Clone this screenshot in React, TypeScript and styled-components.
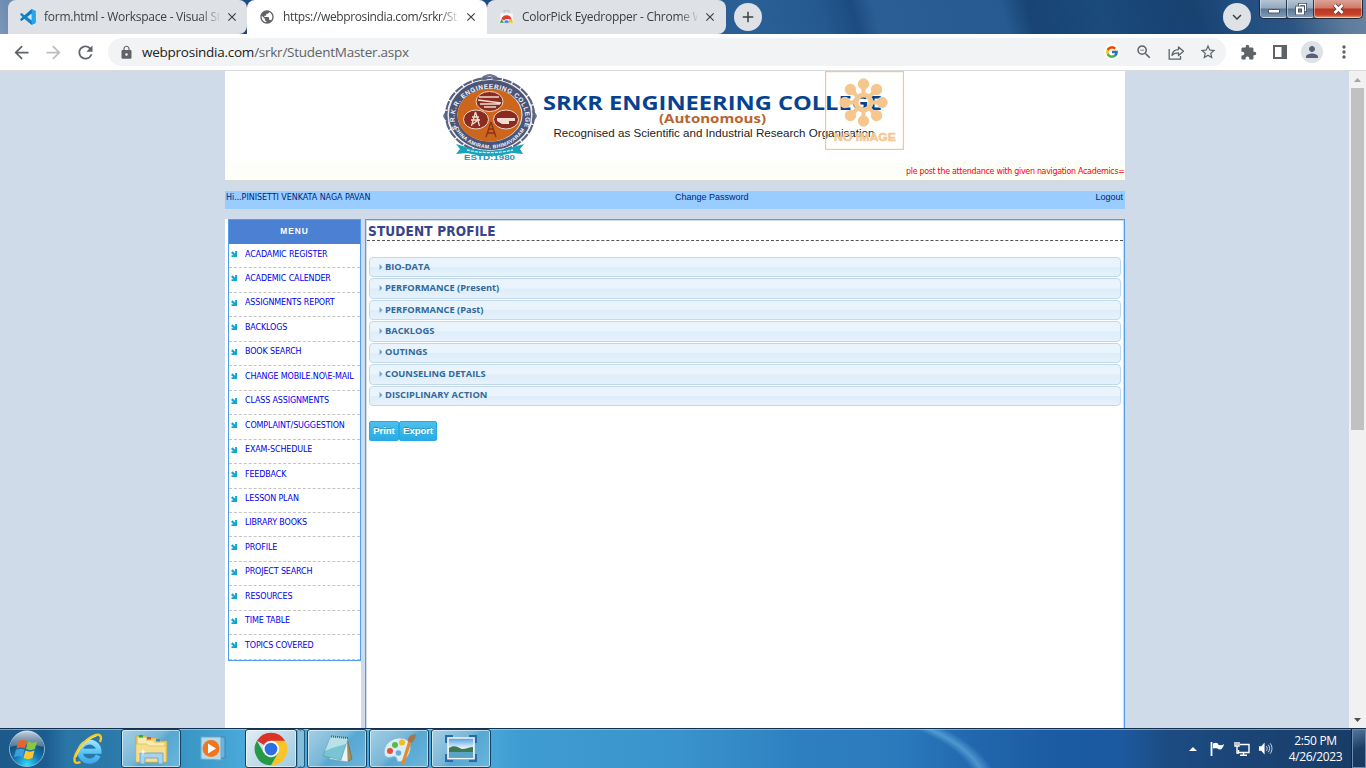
import React from "react";
import styled, { createGlobalStyle } from "styled-components";
import {
  MdAdd, MdArrowBack, MdArrowForward, MdClose, MdExtension, MdLock, MdMoreVert,
  MdPerson, MdPublic, MdRefresh, MdStarBorder, MdZoomOut, MdKeyboardArrowDown,
} from "react-icons/md";
import { FcGoogle } from "react-icons/fc";

const GlobalStyle = createGlobalStyle`
  * { box-sizing: border-box; }
  body { margin: 0; overflow: hidden; background: #d0dbe9; }
`;

const ui = `"Open Sans", "Noto Sans", sans-serif`;
const tahoma = `"DejaVu Sans", sans-serif`;
const tahomaBold = `"DejaVu Sans Condensed", "DejaVu Sans", sans-serif`;

const Screen = styled.div`
  width: 1366px;
  height: 768px;
  display: flex;
  flex-direction: column;
  overflow: hidden;
`;

/* ---------- browser chrome ---------- */

const TabStrip = styled.div`
  height: 34px;
  flex: none;
  display: flex;
  padding-left: 8px;
  background: linear-gradient(75deg, #7d97ba 0, #6f8cb2 12px, #1b4a84 240px, #1b4a84 490px, #2b6096 730px,
    #24588f 800px, #1c4b80 830px, #2b5e94 850px, #265a90 975px, #174474 1000px, #1b4a7c 1070px, #174474 1120px,
    #184270 1160px, #204e80 1200px, #2a5482 1250px, #5b7a9c 1300px, #7a92ab 1366px);
`;

const Tab = styled.div<{ $active?: boolean; $width: number }>`
  width: ${(p) => p.$width}px;
  height: 34px;
  display: flex;
  align-items: center;
  padding-left: 12px;
  border-radius: ${(p) => (p.$active ? "8px 8px 0 0" : "8px 8px 8px 0")};
  background: ${(p) => (p.$active ? "#fff" : "#dee1e6")};
  svg { flex: none; }
`;

const TabTitle = styled.div<{ $spacing: number }>`
  width: 175px;
  margin-left: 8px;
  margin-right: 6px;
  font: 12px/18px ${ui};
  letter-spacing: ${(p) => p.$spacing}px;
  color: #3c4043;
  white-space: nowrap;
  overflow: hidden;
  mask-image: linear-gradient(90deg, #000 156px, transparent 178px);
`;

const RoundButton = styled.div<{ $left: number }>`
  width: 28px;
  height: 28px;
  margin: 3px 0 0 ${(p) => p.$left}px;
  border-radius: 50%;
  background: #dee1e6;
  color: #3c4043;
  display: flex;
  align-items: center;
  justify-content: center;
`;

const WindowButtons = styled.div`
  display: flex;
  width: 104px;
  height: 19px;
  margin-left: 8px;
  border: 1px solid #1f2a3a;
  border-top: 0;
  border-radius: 0 0 5px 5px;
  overflow: hidden;
`;

const WindowButton = styled.div<{ $kind: "plain" | "close" }>`
  width: ${(p) => (p.$kind === "close" ? 48 : 27.5)}px;
  display: flex;
  align-items: center;
  justify-content: center;
  border: 1px solid rgba(255, 255, 255, 0.4);
  border-top: 0;
  border-radius: 0 0 3px 3px;
  background: ${(p) =>
    p.$kind === "close"
      ? "linear-gradient(#dba296, #cf7a67 8px, #b93521 9px, #c8452b 15px, #d98b68)"
      : "linear-gradient(#b5c4d3, #93a9bf 8px, #5b7896 9px, #7f99b3)"};
  & + & { box-shadow: -1px 0 0 #26364b; }
`;

const Toolbar = styled.div`
  height: 37px;
  flex: none;
  display: flex;
  align-items: center;
  padding: 0 6px 0 5px;
  background: #fff;
  border-bottom: 1px solid #d7d9dc;
`;

const IconCell = styled.div<{ $color?: string }>`
  width: 32px;
  height: 28px;
  flex: none;
  display: flex;
  align-items: center;
  justify-content: center;
  color: ${(p) => p.$color ?? "#5f6368"};
`;

const AddressBar = styled.div`
  width: 1118px;
  height: 28px;
  margin: 0 6px 0 7px;
  padding: 0 2px 0 11px;
  border-radius: 14px;
  background: #f1f3f4;
  display: flex;
  align-items: center;
`;

const Url = styled.div`
  flex: 1;
  margin-left: 8px;
  font: 13.5px/20px ${ui};
  letter-spacing: -0.25px;
  color: #5f6368;
  b { font-weight: 400; color: #202124; }
`;

const Disc = styled.div<{ $size: number; $bg: string }>`
  width: ${(p) => p.$size}px;
  height: ${(p) => p.$size}px;
  border-radius: 50%;
  background: ${(p) => p.$bg};
  display: flex;
  align-items: center;
  justify-content: center;
`;

/* ---------- page ---------- */

const Viewport = styled.div`
  height: 657px;
  flex: none;
  display: flex;
  overflow: hidden;
  background: #d0dbe9;
`;

const Page = styled.div`
  width: 900px;
  height: 657px;
  margin-left: 225px;
  display: flex;
  flex-direction: column;
`;

const Banner = styled.div`
  position: relative;
  height: 90px;
  flex: none;
  background: #fff;
`;

const NoImage = styled.svg`
  position: absolute;
  left: 600px;
  top: 0;
`;

const Marquee = styled.div`
  height: 20px;
  flex: none;
  padding: 5px 0 0 681px;
  background: #fdfef8;
  border-bottom: 1px solid #d9dcd5;
  overflow: hidden;
  white-space: nowrap;
  font: 8px/12px "DejaVu Sans", sans-serif;
  letter-spacing: -0.33px;
  color: #f00;
`;

const UserBar = styled.div`
  height: 18px;
  flex: none;
  margin-top: 10px;
  padding: 0 2px 0 1px;
  background: #99ccff;
  display: grid;
  grid-template-columns: 449px 1fr auto;
  font: 9px/12px "Liberation Sans", sans-serif;
  color: #00247a;
`;

const UserName = styled.span`
  font: 8px/13px ${tahoma};
  letter-spacing: -0.05px;
`;

const Columns = styled.div`
  display: flex;
  flex: 1;
  margin-top: 10px;
`;

const Sidebar = styled.div`
  width: 136px;
  padding-left: 3px;
  background: #fff;
`;

const Menu = styled.div`
  border: 1px solid #4f9fee;
`;

const MenuTitle = styled.div`
  height: 24px;
  background: #4c80d2;
  color: #fff;
  font: bold 8.4px/23px "Liberation Sans", sans-serif;
  letter-spacing: 0.95px;
  text-align: center;
`;

const MenuItem = styled.div`
  height: 24.46px;
  display: flex;
  align-items: flex-start;
  padding: 6.5px 0 0 2px;
  border-bottom: 1px dashed #c4c4c4;
  font: 8px/8px ${tahoma};
  letter-spacing: -0.15px;
  color: #0000f0;
  white-space: nowrap;
  svg { margin: 0.5px 8px 0 0; flex: none; }
`;

const Main = styled.div`
  width: 760px;
  margin-left: 4px;
  border: 1px solid #4f9fee;
  border-bottom: 0;
  background: #fff;
  box-shadow: inset 1px 1px 0 #d0dbe9, inset -1px 0 0 #d0dbe9;
  padding: 1px 1px 0;
`;

const Heading = styled.h1`
  height: 20px;
  margin: 0 0 16px;
  padding-left: 1px;
  border-bottom: 1px dashed #555;
  font: bold 13.5px/20px ${tahomaBold};
  letter-spacing: 0.15px;
  color: #36458b;
`;

const Accordion = styled.div`
  padding: 0 2px;
`;

const AccordionHeader = styled.div`
  height: 20.45px;
  margin-bottom: 1px;
  padding: 0 0 1px 9px;
  display: flex;
  align-items: center;
  border: 1px solid #c1d9ea;
  border-radius: 4px;
  background: linear-gradient(#e9f4fd 48%, #deedf9 52%, #e6f2fc);
  font: bold 9.3px/16px ${ui};
  color: #316a9b;
  svg { margin-right: 2px; }
`;

const Actions = styled.div`
  display: flex;
  margin: 14.7px 0 0 2px;
`;

const ActionButton = styled.div<{ $width: number }>`
  width: ${(p) => p.$width}px;
  height: 20px;
  border: 1px solid #20aae6;
  border-radius: 2px;
  background: linear-gradient(#4cc0ee, #2aabe3);
  color: #fff;
  font: bold 9.6px/18px "Liberation Sans", sans-serif;
  letter-spacing: -0.1px;
  text-align: center;
  text-shadow: 0 -1px 0 rgba(0, 0, 0, 0.25);
`;

const ScrollTrack = styled.div`
  width: 17px;
  margin-left: auto;
  background: #f1f1f1;
  display: flex;
  flex-direction: column;
  align-items: center;
`;

const ScrollArrow = styled.div`
  height: 17px;
  display: flex;
  align-items: center;
`;

const ScrollThumb = styled.div`
  width: 13px;
  height: 342px;
  margin-bottom: auto;
  background: #c1c1c1;
`;

/* ---------- taskbar ---------- */

const Taskbar = styled.div`
  height: 40px;
  flex: none;
  display: flex;
  align-items: stretch;
  border-top: 1px solid #12304e;
  box-shadow: inset 0 1px 0 rgba(190, 220, 245, 0.55);
  background:
    radial-gradient(ellipse 190px 90px at -70px 62px, transparent 88%, rgba(120, 195, 240, 0.5) 93%, transparent 99%) 880px 0 / 160px 40px no-repeat,
    linear-gradient(90deg, #1d5a8b 0, #1c5c8f 45px, #2a76a6 66px, #2a79a8 110px, #3d9bca 200px, #4aa8d8 240px,
      #4ca9d9 480px, #3f9cd2 520px, #3a93cc 680px, #2d80bf 800px, #2b7abd 900px, #2268ae 970px, #1a5ba2 1060px, #1c5aa0 1120px,
      #1c4c84 1165px, #1b4475 1250px, #183c66 1366px);
`;

const Slot = styled.div<{ $width: number }>`
  width: ${(p) => p.$width}px;
  display: flex;
  align-items: center;
  justify-content: center;
`;

const TaskButton = styled(Slot)<{ $strong?: boolean }>`
  margin-right: 2px;
  border: 1px solid #173f5e;
  border-radius: 3px;
  box-shadow: inset 0 0 0 1px rgba(255, 255, 255, 0.55);
  background: ${(p) =>
    p.$strong
      ? "linear-gradient(135deg, #e3edf3, #b9d8e8 60%, #9ccce5)"
      : "linear-gradient(135deg, #a5cfe4, #78b7d8 45%, #56a7d2 55%, #6bb6dc)"};
`;

const StackEdge = styled.div`
  width: 4px;
  margin-left: -1px;
  border: 1px solid #235a7d;
  border-left: 0;
  border-radius: 0 3px 3px 0;
  background: #83bedb;
`;

const Tray = styled.div`
  display: flex;
  align-items: center;
  margin-left: auto;
`;

const Clock = styled.div`
  width: 75px;
  padding: 1px 0 0 2px;
  text-align: center;
  color: #fff;
  font: 12px/16px ${ui};
  letter-spacing: -0.35px;
`;

const ShowDesktop = styled.div`
  width: 14px;
  align-self: stretch;
  border: 1px solid #6d8db0;
  background: linear-gradient(160deg, #54759b, #1c3d66 50%, #1a3860);
  box-shadow: -1px 0 0 #0d2442;
`;

/* ---------- drawings ---------- */

const VsCodeLogo = () => (
  <svg width="16" height="16" viewBox="0 0 100 100">
    <path d="M73 1 97 12V88L73 99 28 61 10 75 2 71V63L73 0z" fill="#0a7cc4" />
    <path d="M2 29v8l71 62V73L10 25z" fill="#1283ce" />
    <path d="M73 1 97 12V88L73 99z" fill="#25a5ee" />
    <path d="M73 28v44L44 50z" fill="#dee1e6" />
  </svg>
);

const WebStoreIcon = () => (
  <svg width="15" height="16" viewBox="0 0 16 16">
    <path d="M5.5 3.5V1.2h5v2.3" fill="none" stroke="#c3c6ca" strokeWidth="1.4" />
    <path d="M1.5 4h13l1 10h-15z" fill="#f4f5f6" />
    <path d="M2.700 10A5.600 5.600 0 0 1 13.400 10H8a3 3 0 0 0-2.600 1.700z" fill="#e33b2e" />
    <path d="M2.6 10 5.4 14H1z" fill="#2fa24c" />
    <path d="M10.8 10H13.7L15 14h-4.5z" fill="#fbc116" />
    <path d="M5.6 14a2.5 2.5 0 0 1 5 0z" fill="#3b7ded" />
  </svg>
);

const ShareIcon = () => (
  <svg width="17" height="17" viewBox="0 0 17 17" fill="none" stroke="#5f6368" strokeWidth="1.3">
    <path d="M1.2 5v10.2h11.3V12" />
    <path d="M4 11.2C4.5 7.6 6.8 5.7 10.5 5.6V3l5 4.3-5 4.2V8.9C7.6 8.9 5.5 9.5 4 11.2z" strokeLinejoin="round" />
  </svg>
);

const SidePanelIcon = () => (
  <svg width="14" height="14" viewBox="0 0 14 14">
    <path d="M0 0h14v14H0z" fill="#5f6368" />
    <path d="M2 2h6.5v10H2z" fill="#fff" />
  </svg>
);

const MenuArrow = () => (
  <svg width="6" height="6" viewBox="0 0 6 6">
    <path d="M6 0v6H.5V4.300h2L0 1.900 1.500.2l2.600 2.600V0z" fill="#12a5d4" />
  </svg>
);

const CollegeLogo = () => (
  <svg width="900" height="90" viewBox="225 71 900 90" overflow="visible">
    <defs>
      <path id="ringTop" d="M457 129A35.500 29.500 0 1 1 523 129" />
      <path id="ringBottom" d="M453.500 125A38 32.500 0 0 0 526.500 125" />
    </defs>
    <path d="M482 83c-3-6 2-8 7.500-9 6 1 11 3 8 9zM443 116c2-5 4-6 8-6v12c-4 0-6-1-8-6zM537 116c-2-5-4-6-8-6v12c4 0 6-1 8-6z" fill="#6e7794" />
    <circle cx="489.500" cy="79" r="2.800" fill="#e8eaf0" />
    <ellipse cx="490" cy="115" rx="44" ry="37" fill="none" stroke="#59637f" strokeWidth="2.200" strokeDasharray="9 1.200" />
    <ellipse cx="490" cy="115" rx="42.500" ry="35.500" fill="#e9e7ea" />
    <ellipse cx="490" cy="115" rx="36.800" ry="30.800" fill="none" stroke="#4b5578" strokeWidth="8.500" />
    <ellipse cx="489.500" cy="115" rx="32" ry="26.500" fill="#cc661d" />
    <g fill="#8c2b21" stroke="#efd6c2" strokeWidth="1">
      <ellipse cx="489.500" cy="101.500" rx="13.500" ry="10" />
      <ellipse cx="476" cy="119.500" rx="12.500" ry="9.500" />
      <ellipse cx="506" cy="119.500" rx="12.500" ry="9.500" />
    </g>
    <g fill="none" stroke="#f1ddce" strokeWidth="1.300">
      <path d="M479 97h20M478 100l23 3M480 104h20M484 107h12" />
      <path d="M475.500 112l-4 14M475.500 112l4 14M472 117h7M471 120h9M473 124l6-5" />
    </g>
    <path d="M497 118h18v3h-6v3h-7l-5-3z" fill="#f1ddce" />
    <path d="M491 122l-5 15M491 122l5 15M488 129h6M487 133h8" stroke="#8a3018" strokeWidth="1.300" fill="none" />
    <text fontFamily="Liberation Sans, sans-serif" fontSize="6.500" fontWeight="700" fill="#f4f5fa">
      <textPath href="#ringTop" textLength="122">S.R.K.R. ENGINEERING COLLEGE</textPath>
    </text>
    <text fontFamily="Liberation Sans, sans-serif" fontSize="5.200" fontWeight="700" fill="#f4f5fa">
      <textPath href="#ringBottom" startOffset="3" textLength="84">CHINA AMIRAM, BHIMAVARAM</textPath>
    </text>
    <path d="M456 144l10 3c14 5 33 5 47 0l11-3-4 5 3 5-11-1c-13 4-31 4-45 0l-11 1 4-5z" fill="#17a3b9" />
    <path d="M467 150c14 3.500 32 3.500 46 0" stroke="#c5edf2" strokeWidth="1.300" strokeDasharray="3 1" fill="none" />
    <text x="464" y="160" textLength="51" lengthAdjust="spacingAndGlyphs" fontFamily="Liberation Sans, sans-serif" fontWeight="700" fontSize="8" fill="#2596b0">ESTD:1980</text>
    <text x="543" y="109.500" textLength="339" lengthAdjust="spacingAndGlyphs" fontFamily="Open Sans, sans-serif" fontWeight="700" fontSize="20" fill="#064290">SRKR ENGINEERING COLLEGE</text>
    <text x="659" y="122.500" textLength="107" lengthAdjust="spacingAndGlyphs" fontFamily="Open Sans, sans-serif" fontWeight="700" fontSize="12" fill="#b8642e">(Autonomous)</text>
    <text x="553.500" y="137" textLength="321" lengthAdjust="spacingAndGlyphs" fontFamily="Liberation Sans, sans-serif" fontSize="11" fill="#222">Recognised as Scientific and Industrial Research Organisation</text>
  </svg>
);

const NoImageMark = () => (
  <NoImage width="79" height="79" viewBox="0 0 79 79">
    <rect x="0.600" y="0.600" width="77.800" height="77.800" fill="none" stroke="#f5c78f" strokeWidth="1.200" />
    <g fill="#f5c78f" stroke="#f5c78f">
      {[0, 45, 90, 135, 180, 225, 270, 315].map((a) => (
        <g key={a} transform={`translate(38.500 31.500) rotate(${a})`}>
          <circle cx="0" cy="-18.500" r="5.200" />
          <path d="M0-18V-8" strokeWidth="4" />
        </g>
      ))}
      <circle cx="38.500" cy="31.500" r="7.500" fill="none" strokeWidth="5" />
    </g>
    <text x="9" y="70" textLength="62" lengthAdjust="spacingAndGlyphs" fontFamily="Liberation Sans, sans-serif" fontWeight="700" fontSize="11" fill="#f5c78f" stroke="#f5c78f" strokeWidth="0.400">NO IMAGE</text>
  </NoImage>
);

const WindowsOrb = () => (
  <svg width="38" height="38" viewBox="0 0 38 38">
    <defs>
      <radialGradient id="orb" cx="0.500" cy="0.950" r="0.800">
        <stop offset="0" stopColor="#2fe0ff" />
        <stop offset="0.450" stopColor="#1679b4" />
        <stop offset="1" stopColor="#123a60" />
      </radialGradient>
      <linearGradient id="orbShine" x1="0" y1="0" x2="0" y2="1">
        <stop offset="0" stopColor="#dfe8ef" stopOpacity="0.900" />
        <stop offset="1" stopColor="#8ba6bd" stopOpacity="0.500" />
      </linearGradient>
    </defs>
    <circle cx="19" cy="19" r="17.500" fill="url(#orb)" stroke="#87b8d6" strokeWidth="1" />
    <path d="M2.500 17a16.500 16.500 0 0 1 33 0c-10-3-23-3-33 0z" fill="url(#orbShine)" />
    <path d="M10.500 11c3-1.500 6-1.500 8.500 0l-2 7.500c-2.500-1.500-5.500-1.500-8.500 0z" fill="#e8632a" />
    <path d="M20 11.500c3 1.500 6 1.500 9 0l-2 7.500c-3 1.500-6 1.500-9 0z" fill="#8cc63c" />
    <path d="M8 19.800c3-1.500 6-1.500 8.500 0l-2 7.500c-2.500-1.500-5.500-1.500-8.500 0z" fill="#3b9fe0" />
    <path d="M17.500 20.500c3 1.500 6 1.500 9 0l-2 7.500c-3 1.500-6 1.500-9 0z" fill="#fbc62e" />
  </svg>
);

const ExplorerE = () => (
  <svg width="32" height="32" viewBox="0 0 32 32">
    <defs>
      <linearGradient id="eBlue" gradientUnits="userSpaceOnUse" x1="0" y1="5" x2="0" y2="31">
        <stop offset="0" stopColor="#b4ecff" />
        <stop offset="0.500" stopColor="#62c8f5" />
        <stop offset="1" stopColor="#3ea4e6" />
      </linearGradient>
    </defs>
    <path d="M26.200 22.500A9.500 9.500 0 1 1 27 18.300H9.500" fill="none" stroke="#2582c4" strokeWidth="6" />
    <path d="M26.200 22.500A9.500 9.500 0 1 1 27 18.300H9.500" fill="none" stroke="url(#eBlue)" strokeWidth="5" />
    <path d="M8.500 29C3 31.500 1 28.500 3.500 22 7 13 16 4.500 24 2c5-1.400 6 2.500 4 7" fill="none" stroke="#f8c81e" strokeWidth="2.400" />
    <path d="M4.300 24C7 14 16 5.500 24.500 3" fill="none" stroke="#fdeb86" strokeWidth="0.900" />
  </svg>
);

const FolderIcon = () => (
  <svg width="34" height="32" viewBox="0 0 34 32">
    <path d="M2 3h10l1.500 2H23l1 3h9v21H2z" fill="#edcf72" stroke="#c7a243" strokeWidth="0.800" />
    <path d="M4 5h8v3h8v2h10v18H4z" fill="#f7eab2" />
    <path d="M2 11h11l2 2h17v16H2z" fill="#f5df8d" stroke="#d8b757" strokeWidth="0.600" />
    <path d="M5 2h4v2.500H5z" fill="#25b23a" /><path d="M13 4h4v2.500h-4z" fill="#d9532c" /><path d="M22 6h4v2.500h-4z" fill="#2f8de0" />
    <path d="M6 20h23v11h-5v-6H11v6H6z" fill="#a7d3ee" stroke="#5b9fc9" strokeWidth="0.800" />
    <path d="M9 15l.7 3.300 3.300.7-3.300.7L9 23l-.7-3.300L5 19l3.300-.7z" fill="#fff" opacity="0.900" />
  </svg>
);

const MediaIcon = () => (
  <svg width="30" height="28" viewBox="0 0 30 28">
    <path d="M5 2h21v21H5z" fill="#67b4dc" stroke="#3d86b5" />
    <path d="M2 2h20v23l-20-1z" fill="#b6d9ec" stroke="#6fa9ca" />
    <circle cx="12" cy="13.500" r="8.500" fill="#f1751d" />
    <path d="M9 8.500l8 5-8 5z" fill="#fff" />
  </svg>
);

const ChromeLogo = () => (
  <svg width="34" height="34" viewBox="0 0 48 48">
    <path d="M24 24 4.080 12.500A23 23 0 0 1 43.920 12.500z" fill="#dd3327" />
    <path d="M43.920 12.500A23 23 0 0 1 24 47L33.960 29.750 24 12.500z" fill="#fbc426" />
    <path d="M24 47A23 23 0 0 1 4.080 12.500L14.040 29.750 33.960 29.750z" fill="#279847" />
    <circle cx="24" cy="24" r="11.500" fill="#fff" />
    <circle cx="24" cy="24" r="9" fill="#2c6fe4" />
  </svg>
);

const NotepadIcon = () => (
  <svg width="32" height="32" viewBox="0 0 32 32">
    <path d="M26 5l5 21-5 3L20 8z" fill="#a98b54" stroke="#6e5a35" strokeWidth="0.600" />
    <path d="M26 5l1 24-19-3z" fill="#edf3f4" stroke="#7d9aa3" strokeWidth="0.600" />
    <path d="M10 3l17 2-7 22L2 23z" fill="#79c5d3" stroke="#5597a6" strokeWidth="0.600" />
    <path d="M10 3l17 2-2 6-14 4-7 3z" fill="#b9e1e8" />
    <path d="M10 3.500l17 1.500" stroke="#5b5b5b" strokeWidth="2" strokeDasharray="1 1" />
  </svg>
);

const PaintIcon = () => (
  <svg width="34" height="34" viewBox="0 0 34 34">
    <path d="M16 6C8 7 2 13 2 20c0 6 5 6 8 5 3-1 5 0 5 3s6 2 10-3c5-6 6-20-9-19z" fill="#d9edf7" stroke="#8db9d2" />
    <circle cx="16.500" cy="21" r="2.800" fill="#63aed5" />
    <circle cx="8" cy="19" r="3" fill="#e4513b" /><circle cx="13" cy="13" r="3" fill="#5bb947" /><circle cx="20" cy="10.500" r="3" fill="#f2bc22" />
    <path d="M28 9L21 31" stroke="#e58a2b" strokeWidth="3.200" strokeLinecap="round" />
    <path d="M26 9c0-4 2-6 8-7-1 4-1 7-5 9z" fill="#a8744b" />
  </svg>
);

const PhotoIcon = () => (
  <svg width="32" height="27" viewBox="0 0 32 27">
    <defs>
      <linearGradient id="photoSky" x1="0" y1="0" x2="0" y2="1">
        <stop offset="0" stopColor="#4f9be8" /><stop offset="0.500" stopColor="#e9f6fc" /><stop offset="1" stopColor="#3f8fbd" />
      </linearGradient>
    </defs>
    <path d="M1 8V1h7M24 1h7v7M31 19v7h-7M8 26H1v-7" fill="none" stroke="#2a6aa8" strokeWidth="2.400" />
    <path d="M3 3h26v20.500H3z" fill="url(#photoSky)" stroke="#f5f5f5" strokeWidth="1.500" />
    <path d="M4 13c6-4 9 0 13 1 4 0 8-2 11-2v5H4z" fill="#3d7a51" />
    <path d="M4 17h24v5.700H4z" fill="#5aa5c6" />
  </svg>
);

const menuItems = [
  "ACADAMIC REGISTER", "ACADEMIC CALENDER", "ASSIGNMENTS REPORT", "BACKLOGS", "BOOK SEARCH",
  "CHANGE MOBILE.NO\\E-MAIL", "CLASS ASSIGNMENTS", "COMPLAINT/SUGGESTION", "EXAM-SCHEDULE", "FEEDBACK",
  "LESSON PLAN", "LIBRARY BOOKS", "PROFILE", "PROJECT SEARCH", "RESOURCES", "TIME TABLE", "TOPICS COVERED",
];

const sections = [
  "BIO-DATA", "PERFORMANCE (Present)", "PERFORMANCE (Past)", "BACKLOGS", "OUTINGS", "COUNSELING DETAILS",
  "DISCIPLINARY ACTION",
];

export default function App() {
  return (
    <Screen>
      <GlobalStyle />
      <TabStrip>
        <Tab $width={239}>
          <VsCodeLogo />
          <TabTitle $spacing={-0.25}>form.html - Workspace - Visual St</TabTitle>
          <MdClose size={14} color="#3c4043" />
        </Tab>
        <Tab $width={240} $active>
          <MdPublic size={16} color="#5f6368" />
          <TabTitle $spacing={-0.37}>https://webprosindia.com/srkr/St</TabTitle>
          <MdClose size={14} color="#3c4043" />
        </Tab>
        <Tab $width={239}>
          <WebStoreIcon />
          <TabTitle $spacing={-0.27}>ColorPick Eyedropper - Chrome W</TabTitle>
          <MdClose size={14} color="#3c4043" />
        </Tab>
        <RoundButton $left={8}><MdAdd size={18} /></RoundButton>
        <RoundButton $left={461}><MdKeyboardArrowDown size={18} /></RoundButton>
        <WindowButtons>
          <WindowButton $kind="plain">
            <svg width="12" height="12" viewBox="0 0 12 12"><path d="M.5 6.500h11v3.500H.5z" fill="#fff" stroke="#4b586b" /></svg>
          </WindowButton>
          <WindowButton $kind="plain">
            <svg width="12" height="12" viewBox="0 0 12 12" fill="none">
              <path d="M4.500 3V1.500h6v6H9" stroke="#3e4b5e" strokeWidth="3" /><path d="M4.500 3V1.500h6v6H9" stroke="#fff" strokeWidth="1.300" />
              <path d="M2 4.500h6v6H2z" stroke="#3e4b5e" strokeWidth="3.400" /><path d="M2 4.500h6v6H2z" stroke="#fff" strokeWidth="2" />
            </svg>
          </WindowButton>
          <WindowButton $kind="close">
            <svg width="13" height="12" viewBox="0 0 13 12"><path d="M2.500 2l8 8M10.500 2l-8 8" stroke="#5a3a40" strokeWidth="4.500" /><path d="M2.500 2l8 8M10.500 2l-8 8" stroke="#fff" strokeWidth="2.700" /></svg>
          </WindowButton>
        </WindowButtons>
      </TabStrip>
      <Toolbar>
        <IconCell><MdArrowBack size={21} /></IconCell>
        <IconCell $color="#bcbec1"><MdArrowForward size={21} /></IconCell>
        <IconCell><MdRefresh size={21} /></IconCell>
        <AddressBar>
          <MdLock size={15} color="#5f6368" />
          <Url><b>webprosindia.com</b>/srkr/StudentMaster.aspx</Url>
          <IconCell><Disc $size={16} $bg="#fff"><FcGoogle size={14} /></Disc></IconCell>
          <IconCell><MdZoomOut size={18} /></IconCell>
          <IconCell><ShareIcon /></IconCell>
          <IconCell><MdStarBorder size={18} /></IconCell>
        </AddressBar>
        <IconCell><MdExtension size={17} /></IconCell>
        <IconCell><SidePanelIcon /></IconCell>
        <IconCell $color="#56617a"><Disc $size={22} $bg="#dee1e6"><MdPerson size={18} /></Disc></IconCell>
        <IconCell><MdMoreVert size={20} /></IconCell>
      </Toolbar>

      <Viewport>
        <Page>
          <Banner>
            <CollegeLogo />
            <NoImageMark />
          </Banner>
          <Marquee>ple post the attendance with given navigation Academics=</Marquee>
          <UserBar>
            <UserName>Hi...PINISETTI VENKATA NAGA PAVAN</UserName>
            <span>Change Password</span>
            <span>Logout</span>
          </UserBar>
          <Columns>
            <Sidebar>
              <Menu>
                <MenuTitle>MENU</MenuTitle>
                {menuItems.map((item) => (
                  <MenuItem key={item}><MenuArrow />{item}</MenuItem>
                ))}
              </Menu>
            </Sidebar>
            <Main>
              <Heading>STUDENT PROFILE</Heading>
              <Accordion>
                {sections.map((s) => (
                  <AccordionHeader key={s}>
                    <svg width="4" height="6" viewBox="0 0 4 6"><path d="M0.500 0l3 3-3 3z" fill="#6ba7d6" /></svg>
                    {s}
                  </AccordionHeader>
                ))}
              </Accordion>
              <Actions>
                <ActionButton $width={30}>Print</ActionButton>
                <ActionButton $width={38}>Export</ActionButton>
              </Actions>
            </Main>
          </Columns>
        </Page>
        <ScrollTrack>
          <ScrollArrow><svg width="7" height="4" viewBox="0 0 7 4"><path d="M3.500 0L7 4H0z" fill="#a3a3a3" /></svg></ScrollArrow>
          <ScrollThumb />
          <ScrollArrow><svg width="7" height="4" viewBox="0 0 7 4"><path d="M3.500 4L7 0H0z" fill="#505050" /></svg></ScrollArrow>
        </ScrollTrack>
      </Viewport>

      <Taskbar>
        <Slot $width={54}><WindowsOrb /></Slot>
        <Slot $width={67}><ExplorerE /></Slot>
        <TaskButton $width={60}><FolderIcon /></TaskButton>
        <Slot $width={62}><MediaIcon /></Slot>
        <TaskButton $width={52} $strong><ChromeLogo /></TaskButton>
        <StackEdge /><StackEdge />
        <Slot $width={2} />
        <TaskButton $width={60}><NotepadIcon /></TaskButton>
        <TaskButton $width={60}><PaintIcon /></TaskButton>
        <TaskButton $width={60}><PhotoIcon /></TaskButton>
        <Tray>
          <Slot $width={24}><svg width="8" height="4" viewBox="0 0 8 4"><path d="M4 0l4 4H0z" fill="#fff" /></svg></Slot>
          <Slot $width={25}>
            <svg width="16" height="16" viewBox="0 0 16 16"><path d="M1.500 1v14" stroke="#fff" strokeWidth="1.800" /><path d="M3 2.500c2-1 4-1 5 0v1c2 1 4 1 6-.5-.5 2-1 3.500-2.500 5-1.500 1-3 .5-4-.5-1-.5-3-.5-4.500 0z" fill="#fff" /></svg>
          </Slot>
          <Slot $width={24}>
            <svg width="16" height="16" viewBox="0 0 16 16" fill="none" stroke="#fff" strokeWidth="1.400"><path d="M6 3.500h9v8H4.500V9M6 14.300h7M9.500 12v2" /><path d="M1 1v4h4V1M3 5v7h2M3 1v3" /></svg>
          </Slot>
          <Slot $width={23}>
            <svg width="15" height="15" viewBox="0 0 16 16"><path d="M1 5.500h2.500L7 1.500v13l-3.500-4H1z" fill="#fff" /><path d="M9 5.500c1 1.500 1 3.500 0 5M11 4c1.800 2.500 1.800 5.500 0 8M13 2.500c2.500 3.500 2.500 7.500 0 11" fill="none" stroke="#dce8f2" strokeWidth="1" /></svg>
          </Slot>
          <Clock>2:50 PM<br />4/26/2023</Clock>
          <ShowDesktop />
        </Tray>
      </Taskbar>
    </Screen>
  );
}
